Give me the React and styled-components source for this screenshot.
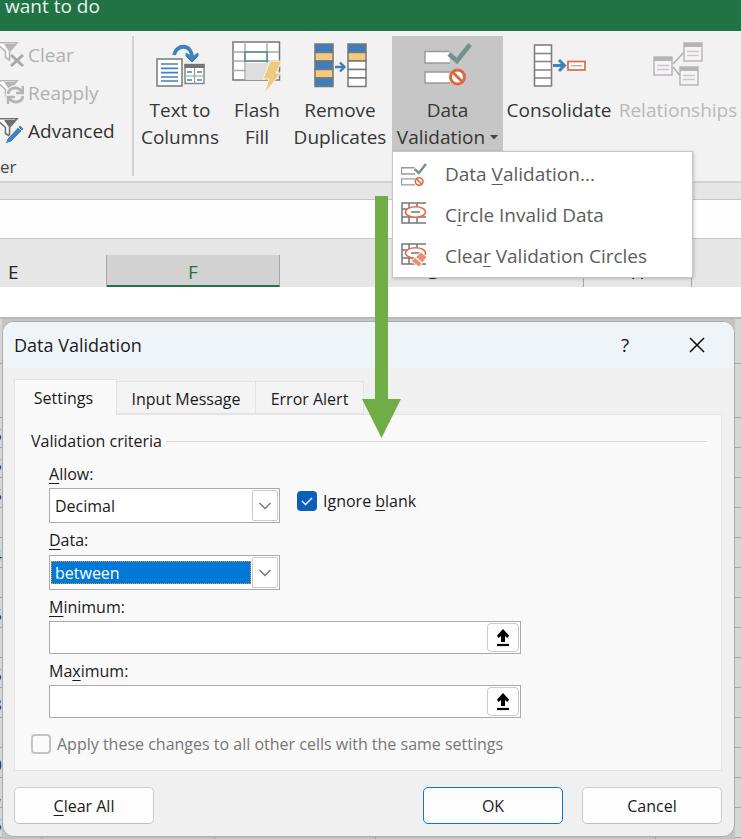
import React from "react";
import styled, { createGlobalStyle, css } from "styled-components";

const Global = createGlobalStyle`
  *, *::before, *::after { box-sizing: border-box; }
  body { margin: 0; background: #fff; }
  body, button, input, select { font-family: "Open Sans", "Noto Sans", sans-serif; }
  button { padding: 0; border: 0; background: none; color: inherit; }
  svg { display: block; flex: none; }
  u { text-underline-offset: 3px; text-decoration-thickness: 1px; }
`;

const Page = styled.main`
  position: relative;
  overflow: hidden;
`;

const TitleBar = styled.header`
  height: 31px;
  padding-left: 5px;
  background: #217346;
  color: #e8f3ec;
  font-size: 19px;
  line-height: 12px;
`;

const Ribbon = styled.section`
  display: grid;
  grid-template-columns: 134fr 92fr 62fr 104fr 111fr 112fr 126fr;
  height: 152px;
  padding-top: 4px;
  background: #f2f2f2;
  border-top: 1px solid #fff;
  border-bottom: 2px solid #d2d2d2;
`;

const FilterGroup = styled.div`
  display: flex;
  flex-direction: column;
  height: 140px;
  border-right: 2px solid #d0d0d0;
`;

const FilterButton = styled.button`
  display: flex;
  flex: none;
  align-items: center;
  gap: 4px;
  height: 38px;
  font-size: 19px;
  white-space: nowrap;
  color: ${(p) => (p.disabled ? "#b1b1b1" : "#333")};
`;

const GroupName = styled.div`
  flex: none;
  padding-top: 4px;
  font-size: 17px;
  line-height: 26px;
  color: #444;
`;

const ToolSlot = styled.div`
  position: relative;
  min-width: 0;
`;

const ToolButton = styled.button`
  display: flex;
  flex-direction: column;
  align-items: center;
  width: 100%;
  height: 116px;
  padding-top: 3px;
  font-size: 19px;
  line-height: 27px;
  white-space: nowrap;
  color: ${(p) => (p.disabled ? "#b9b9b9" : "#363636")};
  background: ${(p) => (p.$open ? "#c6c6c6" : "transparent")};
`;

const ToolIcon = styled.span`
  display: flex;
  height: 58px;
`;

const CaretLine = styled.span`
  display: flex;
  align-items: center;
  gap: 5px;
`;

const Menu = styled.div`
  position: absolute;
  z-index: 2;
  top: 115px;
  left: 0;
  width: 301px;
  padding: 1px 0;
  background: #fff;
  border: 1px solid #c6c6c6;
  box-shadow: 1px 1px 3px rgba(0, 0, 0, 0.2);
`;

const MenuItem = styled.button`
  display: flex;
  align-items: center;
  gap: 18px;
  width: 100%;
  height: 41px;
  padding-left: 8px;
  font-size: 19px;
  color: #5c5c5c;
  white-space: nowrap;
`;

const Strip = styled.div`
  height: 17px;
  background: #e6e6e6;
  border-bottom: 1px solid #c6c6c6;
`;

const FormulaBar = styled.div`
  height: 39px;
  background: #fdfdfd;
  border-bottom: 1px solid #c6c6c6;
`;

const ColumnHeads = styled.div`
  display: grid;
  grid-template-columns: 107fr 173fr 304fr 108fr 49fr;
  height: 48px;
  padding-top: 16px;
  background: #e6e6e6;
`;

const ColumnHead = styled.div`
  font-size: 19px;
  line-height: 34px;
  overflow: hidden;
  text-align: ${(p) => (p.$left ? "left" : "center")};
  padding-left: ${(p) => (p.$left ? "8px" : "0")};
  color: #222;
  border-right: 1px solid #a8a8a8;
  ${(p) =>
    p.$selected &&
    css`
      color: #217346;
      background: #d2d2d2;
      border-bottom: 2px solid #217346;
    `}
  &:last-child { border-right: 0; }
`;

const Sheet = styled.section`
  display: grid;
  grid-template-columns: 2px 1fr 6px;
  margin-top: 30px;
  border-top: 2px solid #b9b9b9;
  background: #c4c4c4;
`;

const Edge = styled.div`
  display: flex;
  flex-direction: column;
  min-width: 0;
  overflow: hidden;
  background: #d6d6d6;
`;

const EdgeCell = styled.div`
  display: flex;
  justify-content: flex-end;
  flex: none;
  height: ${(p) => (p.$tall ? p.$tall : 30)}px;
  font-size: 17px;
  line-height: 34px;
  color: #3a2a2a;
  border-bottom: 1px solid #a4a4a4;
`;

const DialogArea = styled.div`
  display: flex;
  flex-direction: column;
  padding-top: 2px;
`;

const Dialog = styled.div`
  background: #f0f0f0;
  border: 1px solid #a9abad;
  border-radius: 12px;
  overflow: hidden;
  font-size: 16px;
  color: #1b1b1b;
`;

const DialogHeader = styled.div`
  display: flex;
  align-items: center;
  height: 46px;
  padding: 0 27px 0 11px;
  background: #eff4f9;
`;

const DialogTitle = styled.h1`
  flex: 1;
  margin: 0;
  font-size: 18px;
  font-weight: 400;
`;

const HeaderButton = styled.button`
  display: grid;
  place-items: center;
  width: 20px;
  height: 24px;
  margin-left: 52px;
  font-size: 19px;
  line-height: 22px;
`;

const DialogBody = styled.div`
  padding: 11px 12px 12px 11px;
`;

const Tabs = styled.div`
  display: flex;
  align-items: flex-end;
  height: 35px;
`;

const Tab = styled.button`
  width: ${(p) => p.$width}px;
  height: 33px;
  padding-top: 2px;
  font-size: 16px;
  background: #f3f3f3;
  border: 1px solid #e3e3e3;
  border-left-width: 0;
  ${(p) =>
    p.$active &&
    css`
      height: 36px;
      margin-bottom: -1px;
      padding: 0 4px 0 0;
      background: #f9f9f9;
      border-left-width: 1px;
      border-bottom: 0;
      position: relative;
    `}
`;

const Panel = styled.div`
  padding: 13px 14px 13px 16px;
  background: #f9f9f9;
  border: 1px solid #e3e3e3;
`;

const Legend = styled.div`
  display: flex;
  align-items: center;
  gap: 4px;
  height: 26px;
  line-height: 26px;
  &::after {
    content: "";
    flex: 1;
    height: 1px;
    background: #dcdcdc;
  }
`;

const Fields = styled.div`
  width: 472px;
  max-width: 100%;
  margin-left: 18px;
  padding-top: 3px;
`;

const FieldRow = styled.div`
  display: flex;
  align-items: flex-end;
  gap: 17px;
`;

const Field = styled.div`
  display: flex;
  flex-direction: column;
  width: ${(p) => (p.$wide ? "100%" : "231px")};
`;

const FieldLabel = styled.label`
  height: ${(p) => (p.$tight ? 31 : 32)}px;
  padding-top: 4px;
  line-height: 26px;
`;

const Control = styled.div`
  display: flex;
  height: ${(p) => (p.$select ? 35 : 33)}px;
  padding: 1px;
  background: #fff;
  border: 1px solid #a8aaae;
`;

const Select = styled.select`
  appearance: none;
  flex: 1;
  min-width: 0;
  margin: ${(p) => (p.$focused ? "4px 1px 4px 0" : "4px 1px 4px 0")};
  padding: 0 4px;
  border: 0;
  outline: ${(p) => (p.$focused ? "1px dotted #e98b3a" : "0")};
  outline-offset: -1px;
  background: ${(p) => (p.$focused ? "#0078d7" : "#fff")};
  color: ${(p) => (p.$focused ? "#fff" : "#1b1b1b")};
  font-size: 16px;
`;

const DropMark = styled.span`
  display: grid;
  place-items: center;
  width: 26px;
  border: 1px solid #c9c9c9;
  border-radius: 2px;
`;

const TextInput = styled.input`
  flex: 1;
  min-width: 0;
  border: 0;
  outline: 0;
  background: #fff;
  font-size: 16px;
`;

const PickButton = styled.button`
  display: grid;
  place-items: center;
  width: 32px;
  border: 1px solid #c9c9c9;
  border-radius: 4px;
  background: #fdfdfd;
`;

const CheckRow = styled.label`
  display: flex;
  align-items: center;
  gap: 6px;
  height: 26px;
  color: ${(p) => (p.$muted ? "#767676" : "#1b1b1b")};
`;

const IgnoreBlank = styled(CheckRow)`
  margin-bottom: 9px;
`;

const ApplyAll = styled(CheckRow)`
  margin-top: 13px;
`;

const Box = styled.span`
  display: grid;
  place-items: center;
  width: 20px;
  height: 20px;
  > * { grid-area: 1 / 1; }
  svg { pointer-events: none; z-index: 1; }
`;

const CheckInput = styled.input`
  appearance: none;
  flex: none;
  width: 20px;
  height: 20px;
  margin: 0;
  border: 2px solid #c4c4c4;
  border-radius: 4px;
  background: #fbfbfb;
  &:checked {
    background: #0a5fb8;
    border-color: #0a5fb8;
  }
`;

const Actions = styled.div`
  display: grid;
  grid-template-columns: 140px 1fr 140px 140px;
  column-gap: 19px;
  padding-top: 16px;
`;

const ActionButton = styled.button`
  grid-column: ${(p) => p.$column};
  height: 37px;
  font-size: 16px;
  background: #fdfdfd;
  border: 1px solid ${(p) => (p.$primary ? "#0a78d0" : "#cdcdcd")};
  border-bottom-color: ${(p) => (p.$primary ? "#0a78d0" : "#bdbdbd")};
  border-radius: 5px;
`;

const SheetFoot = styled.div`
  display: grid;
  grid-template-columns: 40fr 173fr 160fr 280fr 79fr;
  height: 4px;
  background: #c1c1c1;
`;

const FootCell = styled.span`
  border-right: 1px solid #999;
`;

const FlowArrow = styled.svg`
  position: absolute;
  z-index: 3;
  top: 196px;
  left: 362px;
  pointer-events: none;
`;

const Funnel = ({ color }) => (
  <>
    <path d="M-4 2.800H17L9.500 11.500V20L5.500 17.500V11.500Z" fill="#fff" stroke={color} strokeWidth="1.6" />
    <path d="M4 4H16L9 11L8 10Z" fill={color} />
  </>
);

const FilterIcon = ({ kind }) => (
  <svg width="24" height="30" viewBox="0 0 24 30" aria-hidden="true">
    <Funnel color={kind === "advanced" ? "#707070" : "#b5b5b5"} />
    {kind === "clear" && (
      <path d="M11 15L23 26M23 15L11 26" stroke="#a9a9a9" strokeWidth="3" fill="none" />
    )}
    {kind === "reapply" && (
      <g fill="none" stroke="#b5b5b5" strokeWidth="3">
        <circle cx="15.5" cy="17" r="10" fill="#f2f2f2" stroke="none" />
        <path d="M8 16C9 9 18 8 22 14M23 18C22 25 13 26 9 20" />
        <path d="M23 8V15H16M8 26V19H15" strokeWidth="2.5" />
      </g>
    )}
    {kind === "advanced" && (
      <>
        <path d="M7 23L20 9L24 13L11 26L5 28Z" fill="#3f82c2" stroke="#f2f2f2" />
        <path d="M18 11L22 15" stroke="#f2f2f2" strokeWidth="1" />
      </>
    )}
  </svg>
);

const TextColumnsIcon = () => (
  <svg width="50" height="50" viewBox="0 0 50 50" aria-hidden="true">
    <rect x="2" y="20" width="25" height="27" fill="#fff" stroke="#808080" strokeWidth="1.6" />
    <path d="M6 25H23M6 29.3H23M6 33.6H23M6 38H23M6 42H23" stroke="#4182bd" strokeWidth="1.7" />
    <rect x="30" y="25.5" width="19" height="19" fill="#fff" stroke="#808080" strokeWidth="1.4" />
    <path d="M29.500 25H49.500V29H29.500Z" fill="#757575" />
    <path d="M39.500 29V45M30 37H49" stroke="#999" strokeWidth="1.2" />
    <path d="M32 33H37M42 33H47M32 41H37M42 41H47" stroke="#4182bd" strokeWidth="1.6" />
    <path d="M19 16C21 5 37 4 37 19" fill="none" stroke="#4182bd" strokeWidth="3.8" />
    <path d="M31 14L37 18L43 14V17L37 23L31 17Z" fill="#4182bd" stroke="#4182bd" />
  </svg>
);

const FlashIcon = () => (
  <svg width="50" height="56" viewBox="0 0 50 56" aria-hidden="true">
    <rect x="1" y="3" width="46.500" height="38" fill="#fff" stroke="#777" strokeWidth="1.5" />
    <path d="M1 13H47M1 22H47M1 31.500H47M13 3V41M35 3V41" stroke="#aaa" strokeWidth="1.4" />
    <path d="M14 24H38L33 41H14Z" fill="#dedede" />
    <rect x="13" y="13" width="22" height="9" fill="#fff" stroke="#5b8a85" strokeWidth="1.6" />
    <path d="M38 22H50L44 34H49L32 55L37 40H31Z" fill="#efc982" stroke="#f7f2e7" strokeWidth="1" />
  </svg>
);

const RemoveIcon = () => (
  <svg width="54" height="50" viewBox="0 0 54 50" aria-hidden="true">
    <g stroke="#777" strokeWidth="1.5">
      {["#3d7fbe", "#f2cb7f", "#3d7fbe", "#f2cb7f", "#3d7fbe"].map((fill, i) => (
        <rect key={i} x="2" y={5 + i * 8.5} width="18" height="8.5" fill={fill} />
      ))}
      {["#3d7fbe", "#f2cb7f", "#fff", "#fff", "#fff"].map((fill, i) => (
        <rect key={i} x="35" y={5 + i * 8.5} width="18" height="8.5" fill={fill} />
      ))}
    </g>
    <path d="M22 28H31M27 23.500L31.500 28L27 32.500" fill="none" stroke="#3d7fbe" strokeWidth="2.4" />
  </svg>
);

const ValidationIcon = ({ width = 48, height = 48, line = 1.4 }) => (
  <svg width={width} height={height} viewBox="0 0 48 48" aria-hidden="true">
    <path d="M25 12.500H1V24H26M26 33H1V44H26" fill="#fff" stroke="#999" strokeWidth={line} />
    <path d="M25 15L33 22L46 5.500" fill="none" stroke="#73908c" strokeWidth="4.500" />
    <circle cx="33.500" cy="38" r="7" fill="#fff" stroke="#dd6840" strokeWidth="3" />
    <path d="M29 33.500L38 42.500" stroke="#dd6840" strokeWidth="3" />
  </svg>
);

const ConsolidateIcon = () => (
  <svg width="54" height="50" viewBox="0 0 54 50" aria-hidden="true">
    <rect x="2.500" y="6" width="17" height="41" fill="#fff" stroke="#808080" strokeWidth="1.6" />
    <path d="M2 14.500H20M2 22.500H20M2 31H20M2 39H20" stroke="#808080" strokeWidth="1.4" />
    <path d="M21 26.500H32M27 21L32.500 26.500L27 32" fill="none" stroke="#4182bd" strokeWidth="3" />
    <rect x="36" y="22.500" width="17" height="8.5" fill="#fff" stroke="#df6a42" strokeWidth="1.7" />
    <path d="M39 26.700H50" stroke="#aaa" strokeWidth="1.3" />
  </svg>
);

const RelationIcon = () => (
  <svg width="50" height="48" viewBox="0 0 50 48" aria-hidden="true">
    <path d="M20 25L32 12M20 28L28 38" stroke="#b4b4b4" strokeWidth="1.6" />
    {[[1, 18], [31, 4], [27, 28]].map(([x, y]) => (
      <g key={x} transform={`translate(${x} ${y})`}>
        <rect width="18" height="18" fill="#f6f2f6" stroke="#b4b4b4" strokeWidth="1.4" />
        <path d="M0 0H18V4H0Z" fill="#b4b4b4" />
        <path d="M3 8.500H15M3 12.500H15" stroke="#c9c9c9" strokeWidth="1.4" />
      </g>
    ))}
  </svg>
);

const CircleDataIcon = ({ erase }) => (
  <svg width="26" height="26" viewBox="0 0 26 26" aria-hidden="true">
    <path d="M25 1H1V21H25M1 7H6M1 15H25M8 1V21M16 1V6M16 15V21" fill="none" stroke="#777" strokeWidth="1.5" />
    <ellipse cx="14.500" cy="10" rx="10" ry="5.200" fill="#fff" stroke="#e1704b" strokeWidth="1.6" />
    <path d="M10 10H19" stroke="#777" strokeWidth="1.5" />
    {erase && (
      <>
        <path d="M20 9L26 14L18 24L10 18Z" fill="#e88e75" stroke="#fff" />
        <path d="M14 14L21 20" stroke="#fff" strokeWidth="1.5" />
      </>
    )}
  </svg>
);

const DropIcon = () => (
  <svg width="14" height="10" viewBox="0 0 14 10" aria-hidden="true">
    <path d="M1.500 2L7 7.500L12.500 2" fill="none" stroke="#777" strokeWidth="1.5" />
  </svg>
);

const PickIcon = () => (
  <svg width="14" height="18" viewBox="0 0 14 18" aria-hidden="true">
    <path d="M7 0L13 6.500L11.500 9L9 7V13H5V7L2.500 9L1 6.500Z" fill="#000" />
    <path d="M1 16H13" stroke="#000" strokeWidth="2.200" />
  </svg>
);

function SheetEdge({ values = [] }) {
  return (
    <Edge aria-hidden="true">
      <EdgeCell $tall={45} />
      <EdgeCell $tall={54} />
      {Array.from({ length: 14 }, (_, i) => (
        <EdgeCell key={i}>{values[i]}</EdgeCell>
      ))}
    </Edge>
  );
}

function RangeField({ id, label, name }) {
  return (
    <Field $wide>
      <FieldLabel htmlFor={id} $tight>{label}</FieldLabel>
      <Control>
        <TextInput id={id} type="text" />
        <PickButton type="button" aria-label={`Pick ${name} range`}><PickIcon /></PickButton>
      </Control>
    </Field>
  );
}

export default function App() {
  return (
    <Page>
      <Global />
      <TitleBar>want to do</TitleBar>
      <Ribbon>
        <FilterGroup>
          <FilterButton disabled><FilterIcon kind="clear" />Clear</FilterButton>
          <FilterButton disabled><FilterIcon kind="reapply" />Reapply</FilterButton>
          <FilterButton><FilterIcon kind="advanced" />Advanced</FilterButton>
          <GroupName>er</GroupName>
        </FilterGroup>
        <ToolButton>
          <ToolIcon><TextColumnsIcon /></ToolIcon>
          <span>Text to</span><span>Columns</span>
        </ToolButton>
        <ToolButton>
          <ToolIcon><FlashIcon /></ToolIcon>
          <span>Flash</span><span>Fill</span>
        </ToolButton>
        <ToolButton>
          <ToolIcon><RemoveIcon /></ToolIcon>
          <span>Remove</span><span>Duplicates</span>
        </ToolButton>
        <ToolSlot>
          <ToolButton $open aria-haspopup="menu" aria-expanded="true">
            <ToolIcon><ValidationIcon /></ToolIcon>
            <span>Data</span>
            <CaretLine>
              Validation
              <svg width="8" height="5" viewBox="0 0 8 5" aria-hidden="true"><path d="M0 0H8L4 4.500Z" fill="#444" /></svg>
            </CaretLine>
          </ToolButton>
          <Menu role="menu">
            <MenuItem role="menuitem"><ValidationIcon width={26} height={26} line={2.4} /><span>Data <u>V</u>alidation...</span></MenuItem>
            <MenuItem role="menuitem"><CircleDataIcon /><span>C<u>i</u>rcle Invalid Data</span></MenuItem>
            <MenuItem role="menuitem"><CircleDataIcon erase /><span>Clea<u>r</u> Validation Circles</span></MenuItem>
          </Menu>
        </ToolSlot>
        <ToolButton>
          <ToolIcon><ConsolidateIcon /></ToolIcon>
          <span>Consolidate</span>
        </ToolButton>
        <ToolButton disabled>
          <ToolIcon><RelationIcon /></ToolIcon>
          <span>Relationships</span>
        </ToolButton>
      </Ribbon>
      <Strip />
      <FormulaBar />
      <ColumnHeads>
        <ColumnHead $left>E</ColumnHead>
        <ColumnHead $selected>F</ColumnHead>
        <ColumnHead>G</ColumnHead>
        <ColumnHead>H</ColumnHead>
        <ColumnHead />
      </ColumnHeads>
      <Sheet>
        <SheetEdge values={["5", "5", "5", "", "4", "", "5", "", "5", "3", "", "0", ",", "5"]} />
        <DialogArea>
          <Dialog role="dialog" aria-labelledby="dialog-title">
            <DialogHeader>
              <DialogTitle id="dialog-title">Data Validation</DialogTitle>
              <HeaderButton aria-label="Help">?</HeaderButton>
              <HeaderButton aria-label="Close">
                <svg width="16" height="16" viewBox="0 0 16 16"><path d="M1 1L15 15M15 1L1 15" stroke="#111" strokeWidth="1.600" /></svg>
              </HeaderButton>
            </DialogHeader>
            <DialogBody>
              <Tabs role="tablist">
                <Tab role="tab" aria-selected="true" $active $width={103}>Settings</Tab>
                <Tab role="tab" $width={139}>Input Message</Tab>
                <Tab role="tab" $width={108}>Error Alert</Tab>
              </Tabs>
              <Panel role="tabpanel">
                <Legend>Validation criteria</Legend>
                <Fields>
                  <FieldRow>
                    <Field>
                      <FieldLabel htmlFor="allow" $tight><u>A</u>llow:</FieldLabel>
                      <Control $select>
                        <Select id="allow" defaultValue="Decimal"><option>Decimal</option></Select>
                        <DropMark><DropIcon /></DropMark>
                      </Control>
                    </Field>
                    <IgnoreBlank>
                      <Box>
                        <CheckInput type="checkbox" defaultChecked />
                        <svg width="12" height="10" viewBox="0 0 12 10" aria-hidden="true">
                          <path d="M1 5L4.500 8.500L11 2" fill="none" stroke="#fff" strokeWidth="1.400" />
                        </svg>
                      </Box>
                      <span>Ignore <u>b</u>lank</span>
                    </IgnoreBlank>
                  </FieldRow>
                  <Field>
                    <FieldLabel htmlFor="data"><u>D</u>ata:</FieldLabel>
                    <Control $select>
                      <Select id="data" $focused defaultValue="between"><option>between</option></Select>
                      <DropMark><DropIcon /></DropMark>
                    </Control>
                  </Field>
                  <RangeField id="minimum" name="minimum" label={<><u>M</u>inimum:</>} />
                  <RangeField id="maximum" name="maximum" label={<>Ma<u>x</u>imum:</>} />
                </Fields>
                <ApplyAll $muted>
                  <CheckInput type="checkbox" disabled />
                  Apply these changes to all other cells with the same settings
                </ApplyAll>
              </Panel>
              <Actions>
                <ActionButton $column={1}><span><u>C</u>lear All</span></ActionButton>
                <ActionButton $column={3} $primary>OK</ActionButton>
                <ActionButton $column={4}>Cancel</ActionButton>
              </Actions>
            </DialogBody>
          </Dialog>
          <SheetFoot><FootCell /><FootCell /><FootCell /><FootCell /></SheetFoot>
        </DialogArea>
        <SheetEdge />
      </Sheet>
      <FlowArrow width="40" height="243" viewBox="0 0 40 243" aria-hidden="true">
        <path d="M13 0H26V203H39L19.500 242L0 203H13Z" fill="#70ad47" />
      </FlowArrow>
    </Page>
  );
}
